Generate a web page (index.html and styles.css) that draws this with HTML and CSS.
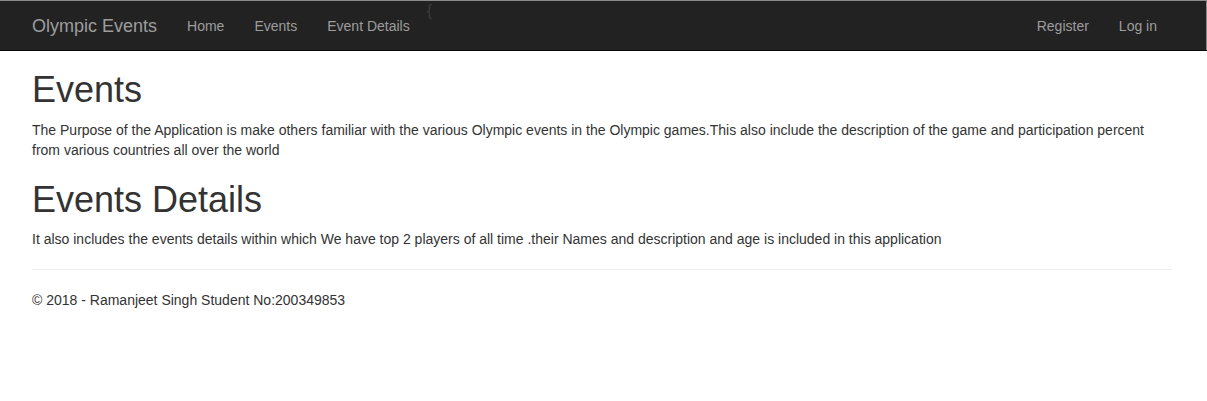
FILE: index.html
```html
<!DOCTYPE html>
<html>
<head>
<meta charset="utf-8">
<title>Events - Olympic Events</title>
<link rel="stylesheet" href="styles.css">
</head>
<body>
<header class="navbar">
  <div class="nav-inner">
    <div class="nav-left">
      <a class="brand" href="#">Olympic Events</a>
      <ul class="nav">
        <li><a href="#">Home</a></li>
        <li><a href="#">Events</a></li>
        <li><a href="#">Event Details</a></li>
      </ul>
      <span class="stray">{</span>
    </div>
    <ul class="nav">
      <li><a href="#">Register</a></li>
      <li><a href="#">Log in</a></li>
    </ul>
  </div>
</header>
<main class="content">
  <h1 class="first">Events</h1>
  <p>The Purpose of the Application is make others familiar with the various Olympic events in the Olympic games.This also include the description of the game and participation percent from various countries all over the world</p>
  <h1>Events Details</h1>
  <p>It also includes the events details within which We have top 2 players of all time .their Names and description and age is included in this application</p>
  <hr class="rule">
  <footer>
    <p>&copy; 2018 - Ramanjeet Singh Student No:200349853</p>
  </footer>
</main>
</body>
</html>
```

FILE: styles.css
```css
html, body {
  margin: 0;
  padding: 0;
  background: #fff;
}
body {
  font-family: "Liberation Sans", Arial, Helvetica, sans-serif;
  font-size: 14px;
  line-height: 1.42857143;
  color: #333;
}
.navbar {
  height: 49px;
  padding-top: 1px;
  background: #222;
  border-bottom: 1px solid #080808;
  box-shadow: inset 0 1px 0 #8a8a8a, inset -1px 0 0 #8a8a8a;
}
.nav-inner {
  width: 1155px;
  margin-left: 17px;
  display: flex;
  justify-content: space-between;
  align-items: flex-start;
}
.nav-left {
  display: flex;
  align-items: flex-start;
}
.brand {
  display: block;
  padding: 15px;
  font-size: 18px;
  line-height: 20px;
  color: #9d9d9d;
  text-decoration: none;
}
.nav {
  display: flex;
  list-style: none;
  margin: 0;
  padding: 0;
}
.nav a {
  display: block;
  padding: 15px;
  line-height: 20px;
  color: #9d9d9d;
  text-decoration: none;
}
.stray {
  margin-left: 2px;
  font-size: 16px;
  line-height: 20px;
  color: #3c3c3c;
}
.content {
  width: 1140px;
  margin-left: 32px;
}
h1 {
  font-family: inherit;
  font-size: 36px;
  font-weight: 500;
  line-height: 1.1;
  margin: 20px 0 10px;
  color: #333;
}
h1.first {
  margin-top: 19px;
}
p {
  margin: 0 0 10px;
}
.rule {
  margin: 20px 0;
  border: 0;
  border-top: 1px solid #eee;
  height: 0;
}
footer p {
  margin: 0 0 10px;
}
```
